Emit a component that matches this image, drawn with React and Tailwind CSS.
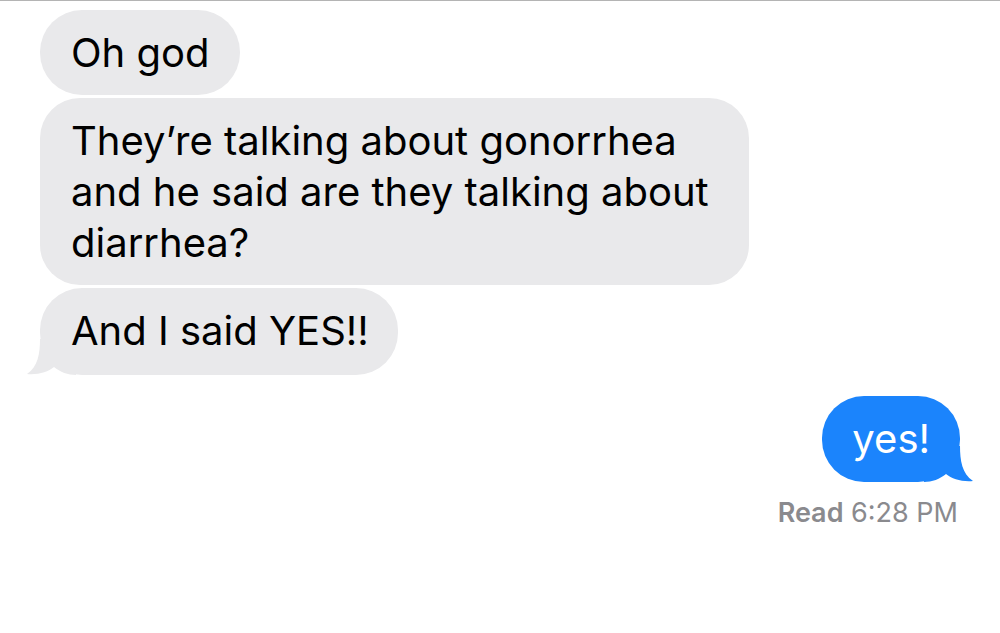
import React from "react";

const font = { fontFamily: "Inter, 'Noto Sans', sans-serif" };

function TailLeft({ color }) {
  return (
    <svg
      className="absolute bottom-0 left-[-14px]"
      width="50"
      height="36"
      viewBox="0 0 50 36"
    >
      <path
        d="M14 0 C14 14 12 28 1 35 C12 36 22 33 28 28 C34 33 42 36 50 36 L50 0 Z"
        fill={color}
      />
    </svg>
  );
}

function TailRight({ color }) {
  return (
    <svg
      className="absolute bottom-0 right-[-14px]"
      width="50"
      height="36"
      viewBox="0 0 50 36"
    >
      <path
        d="M36 0 C36 14 38 28 49 35 C38 36 28 33 22 28 C16 33 8 36 0 36 L0 0 Z"
        fill={color}
      />
    </svg>
  );
}

export default function App() {
  return (
    <div
      className="w-[1000px] h-[633px] bg-white border-t border-[#b4b4b4] overflow-hidden"
      style={font}
    >
      <div className="flex flex-col px-[40px] pt-[9px] gap-[3px]">
        <div className="self-start bg-[#e9e9eb] rounded-[42px] pl-[31px] pr-[30px] py-[17px] text-[40px] leading-[51px] text-black">
          Oh god
        </div>
        <div className="self-start bg-[#e9e9eb] rounded-[40px] pl-[31px] pr-[40px] py-[17px] text-[40px] leading-[51px] text-black">
          They’re talking about gonorrhea
          <br />
          and he said are they talking about
          <br />
          diarrhea?
        </div>
        <div className="relative self-start bg-[#e9e9eb] rounded-[42px] pl-[31px] pr-[29px] pt-[17px] pb-[19px] text-[40px] leading-[51px] text-black">
          <TailLeft color="#e9e9eb" />
          <span className="relative">And I said YES!!</span>
        </div>
        <div className="relative self-end mt-[18px] bg-[#1b84fc] rounded-[42px] px-[30px] pt-[17px] pb-[18px] text-[40px] leading-[51px] text-white">
          <TailRight color="#1b84fc" />
          <span className="relative">yes!</span>
        </div>
        <div className="self-end mt-[11px] mr-[2px] text-[27px] leading-[34px] text-[#8a8a8e]">
          <span className="font-semibold">Read</span> 6:28 PM
        </div>
      </div>
    </div>
  );
}
